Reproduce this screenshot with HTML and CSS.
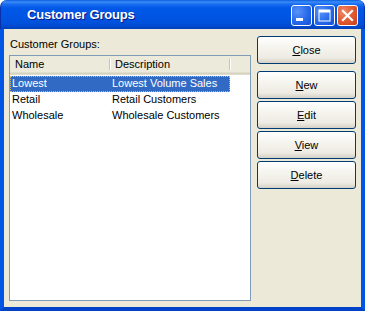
FILE: index.html
```html
<!DOCTYPE html>
<html>
<head>
<meta charset="utf-8">
<link rel="stylesheet" href="styles.css">
</head>
<body>
<div class="window">
  <div class="titlebar">
    <span class="title">Customer Groups</span>
    <div class="tbtns">
      <span class="tbtn blue">
        <svg width="21" height="21" viewBox="0 0 21 21"><rect x="5" y="13" width="7" height="3" fill="#fff"/></svg>
      </span>
      <span class="tbtn blue">
        <svg width="21" height="21" viewBox="0 0 21 21"><rect x="5" y="5" width="11" height="11" fill="none" stroke="#fff" stroke-width="1"/><rect x="5" y="5" width="11" height="2.5" fill="#fff"/></svg>
      </span>
      <span class="tbtn red">
        <svg width="21" height="21" viewBox="0 0 21 21"><path d="M6 6 L15 15 M15 6 L6 15" stroke="#fff" stroke-width="2.2" stroke-linecap="square"/></svg>
      </span>
    </div>
  </div>
  <div class="client">
    <div class="leftcol">
      <div class="label">Customer Groups:</div>
      <div class="listview">
        <div class="header">
          <div class="hcol c1">Name</div>
          <div class="hcol c2">Description</div>
          <div class="hfill"></div>
        </div>
        <div class="row selected"><span class="c1">Lowest</span><span class="c2">Lowest Volume Sales</span></div>
        <div class="row"><span class="c1">Retail</span><span class="c2">Retail Customers</span></div>
        <div class="row"><span class="c1">Wholesale</span><span class="c2">Wholesale Customers</span></div>
      </div>
    </div>
    <div class="rightcol">
      <button class="btn first"><u>C</u>lose</button>
      <button class="btn"><u>N</u>ew</button>
      <button class="btn"><u>E</u>dit</button>
      <button class="btn"><u>V</u>iew</button>
      <button class="btn"><u>D</u>elete</button>
    </div>
  </div>
</div>
</body>
</html>
```

FILE: styles.css
```css
* { box-sizing: border-box; }
html, body { margin: 0; padding: 0; background: #fff; }
body { font-family: "Liberation Sans", Arial, sans-serif; font-size: 11px; color: #000; }

.window { width: 365px; height: 311px; display: flex; flex-direction: column; background: #fff; }

.titlebar {
  height: 29px;
  border-radius: 7px 7px 0 0;
  background: linear-gradient(to bottom, #0A5BE0 0px, #3B8CF6 2px, #1C6FF0 4px, #0058E8 8px, #0055E3 16px, #0052DD 22px, #004BD0 26px, #0040B8 29px);
  display: flex;
  align-items: flex-start;
  padding-left: 26px;
  padding-right: 6px;
  border-left: 1px solid #0830A8;
  border-right: 1px solid #0830A8;
}
.title {
  color: #fff;
  font-family: "Liberation Sans", Arial, sans-serif;
  font-weight: bold;
  font-size: 13px;
  letter-spacing: -0.2px;
  line-height: 16px;
  margin-top: 7px;
  text-shadow: 1px 1px 0 #0A1883;
}
.tbtns { margin-left: auto; margin-top: 5px; display: flex; gap: 2px; }
.tbtn {
  width: 21px; height: 21px; border-radius: 3px;
  border: 1px solid #fff;
  display: block;
  position: relative;
}
.tbtn svg { position: absolute; left: -1px; top: -1px; }
.tbtn.blue { background: radial-gradient(circle at 30% 30%, #5A94F8 0%, #2A6CEC 50%, #1450D8 100%); }
.tbtn.red { background: radial-gradient(circle at 30% 30%, #F08A6A 0%, #E25A30 50%, #C8401C 100%); }

.client {
  flex: 1;
  background: #ECE9D8;
  border-left: 4px solid #0055E5;
  border-right: 4px solid #0055E5;
  border-bottom: 4px solid #0042C8;
  display: flex;
  padding: 0 5px 0 5px;
}

.leftcol { width: 242px; display: flex; flex-direction: column; }
.label { margin-top: 9px; line-height: 13px; padding-left: 1px; }
.listview {
  margin-top: 4px;
  width: 242px;
  height: 246px;
  background: #fff;
  border: 1px solid #7F9DB9;
}
.header {
  display: flex;
  height: 19px;
  background: #EBEADB;
  border-bottom: 1px solid #E2DECD;
  box-shadow: inset 0 -1px 0 #D6D2C2, inset 0 -2px 0 #E2DECD;
}
.hcol {
  line-height: 16px;
  padding-left: 5px;
  position: relative;
}
.hcol::after {
  content: "";
  position: absolute;
  right: 0; top: 3px; bottom: 4px;
  width: 1px;
  background: #C7C5B2;
  box-shadow: 1px 0 0 #fff;
}
.hcol.c1 { width: 100px; }
.hcol.c2 { width: 120px; }
.hfill { flex: 1; }

.row { display: flex; height: 16px; line-height: 15px; width: 220px; }
.row .c1 { width: 100px; padding-left: 2px; }
.row .c2 { width: 120px; padding-left: 2px; }
.row.selected { background: #316AC5; color: #fff; outline: 1px dotted #D8B860; outline-offset: -1px; margin-top: 1px; }

.rightcol { margin-left: 6px; display: flex; flex-direction: column; padding-top: 7px; gap: 2px; }
.btn {
  width: 99px;
  height: 28px;
  font-family: "Liberation Sans", Arial, sans-serif;
  font-size: 11px;
  color: #000;
  border: 1px solid #003C74;
  border-radius: 3px;
  background: linear-gradient(to bottom, #FFFFFF 0%, #F5F4EE 40%, #EDEBE3 80%, #D6D0C5 100%);
  padding: 0;
  margin: 0;
}
.btn.first { margin-bottom: 5px; }
```
